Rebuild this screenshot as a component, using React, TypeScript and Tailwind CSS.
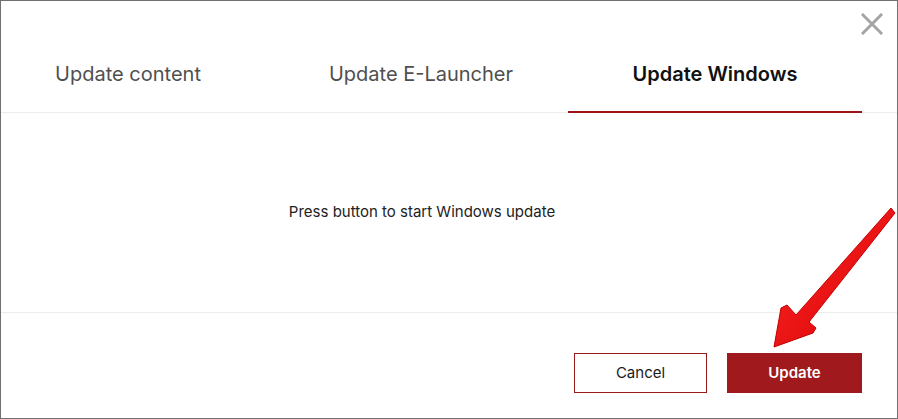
import React, { useState } from 'react';

const TABS = ['Update content', 'Update E-Launcher', 'Update Windows'];

function CloseIcon() {
  return (
    <svg width="22" height="22" viewBox="0 0 22 22" className="block">
      <path d="M2 2 L20 20 M20 2 L2 20" stroke="#a5a5a5" strokeWidth="3" strokeLinecap="square" />
    </svg>
  );
}

function Arrow() {
  return (
    <svg
      className="pointer-events-none absolute left-0 top-0"
      width="898"
      height="419"
      viewBox="0 0 898 419"
    >
      <defs>
        <linearGradient id="arrowFill" x1="0" y1="0" x2="1" y2="1">
          <stop offset="0" stopColor="#ff2a2a" />
          <stop offset="1" stopColor="#d60000" />
        </linearGradient>
      </defs>
      <polygon
        points="890,207 894,212 808,321 815,327 812,332 773,346 780,307 786,304 795,314"
        fill="url(#arrowFill)"
        stroke="#c40000"
        strokeWidth="1"
        strokeLinejoin="round"
      />
    </svg>
  );
}

export default function App() {
  const [active, setActive] = useState(2);

  return (
    <div
      className="relative h-[419px] w-[898px] overflow-hidden border border-[#707070] bg-white"
      style={{ fontFamily: 'Inter, "Noto Sans", sans-serif' }}
    >
      <button className="absolute right-[14px] top-[12px]" aria-label="Close">
        <CloseIcon />
      </button>

      <div className="border-b border-[#ececec] pt-[36px]">
        <div className="-mb-px flex h-[76px]">
          {TABS.map((t, i) => (
            <button
              key={t}
              onClick={() => setActive(i)}
              className={
                (i === 0 ? 'w-[273px] pr-[19px] ' : 'w-[294px] ') +
                'flex items-center justify-center text-[20px] ' +
                (active === i
                  ? 'border-b-2 border-[#9e1414] font-semibold text-[#111111]'
                  : 'border-b-2 border-transparent font-normal text-[#4f4f4f]')
              }
            >
              {t}
            </button>
          ))}
        </div>
      </div>

      <div className="flex h-[199px] items-center justify-center pr-[54px] text-[15px] text-[#222222]">
        Press button to start Windows update
      </div>

      <div className="flex justify-end gap-5 border-t border-[#ececec] pr-[35px] pt-[40px]">
        <button className="h-[40px] w-[133px] border border-[#9b1a1a] bg-white text-[15px] text-[#1a1a1a]">
          Cancel
        </button>
        <button className="h-[40px] w-[135px] bg-[#a01a1d] text-[15px] font-semibold text-white">
          Update
        </button>
      </div>

      <Arrow />
    </div>
  );
}
